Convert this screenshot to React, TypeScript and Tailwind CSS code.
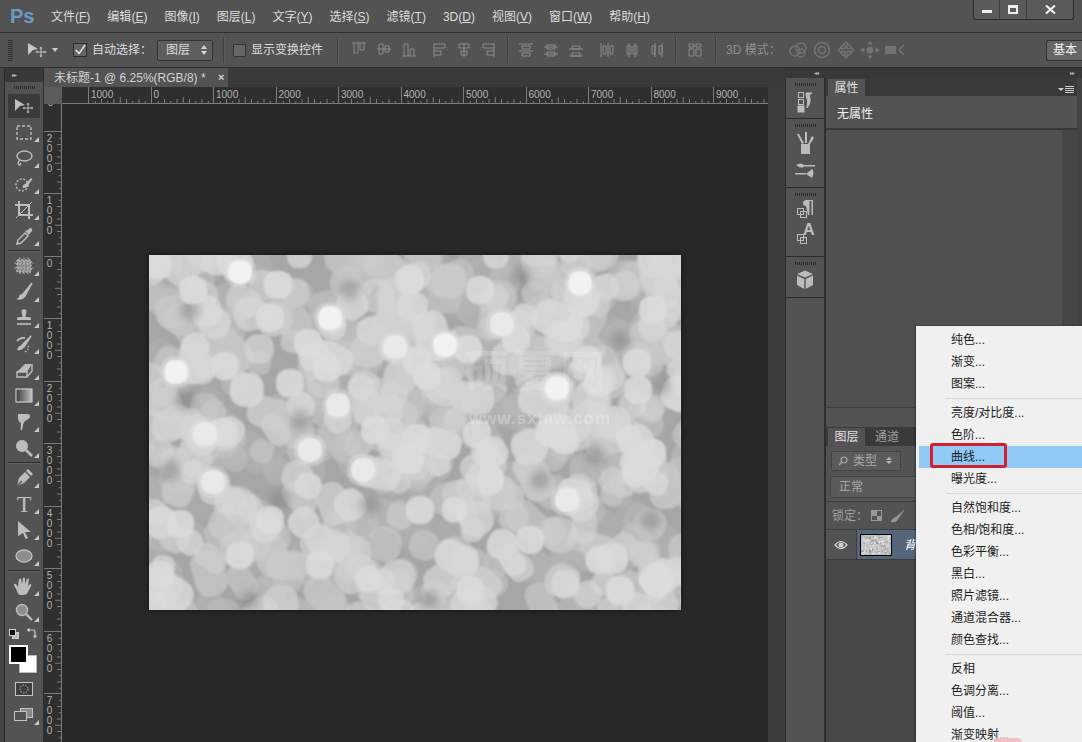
import type { ReactNode } from "react";

const menus = [
  ["文件", "F"],
  ["编辑", "E"],
  ["图像", "I"],
  ["图层", "L"],
  ["文字", "Y"],
  ["选择", "S"],
  ["滤镜", "T"],
  ["3D", "D"],
  ["视图", "V"],
  ["窗口", "W"],
  ["帮助", "H"],
];

// items of the adjustment layer menu, null is a separator
const adjustItems: (string | null)[] = [
  "纯色...",
  "渐变...",
  "图案...",
  null,
  "亮度/对比度...",
  "色阶...",
  "曲线...",
  "曝光度...",
  null,
  "自然饱和度...",
  "色相/饱和度...",
  "色彩平衡...",
  "黑白...",
  "照片滤镜...",
  "通道混合器...",
  "颜色查找...",
  null,
  "反相",
  "色调分离...",
  "阈值...",
  "渐变映射...",
];

function rng(seed: number) {
  return () => {
    seed |= 0;
    seed = (seed + 0x6d2b79f5) | 0;
    let t = Math.imul(seed ^ (seed >>> 15), 1 | seed);
    t = (t + Math.imul(t ^ (t >>> 7), 61 | t)) ^ t;
    return ((t ^ (t >>> 14)) >>> 0) / 4294967296;
  };
}

// page coordinates of the hottest highlights
const hotSpots = [
  [240, 272], [330, 318], [176, 372], [445, 345], [557, 388], [580, 283], [395, 347], [310, 450],
  [363, 470], [213, 482], [567, 500], [205, 434], [338, 405], [502, 324],
];

const softSpots = [
  [278, 285], [158, 265], [193, 290], [270, 318], [225, 366], [308, 343], [327, 368], [290, 383],
  [468, 349], [417, 361], [427, 376], [516, 339], [653, 310], [637, 363], [638, 390], [587, 360],
  [598, 383], [417, 438], [549, 432], [652, 453], [636, 473], [410, 460], [477, 434], [565, 440],
  [223, 432], [407, 458], [320, 565], [180, 524], [470, 590], [240, 555], [530, 540], [160, 575],
  [600, 560], [420, 510], [490, 480], [270, 520], [375, 430], [480, 290], [410, 280], [620, 590],
];

const darkSpots = [
  [185, 400], [370, 505], [595, 455], [660, 385], [280, 500], [480, 370], [190, 310], [620, 340],
  [250, 600], [430, 600], [540, 480], [300, 420], [650, 520], [350, 290], [170, 470], [520, 275],
];

function Bokeh() {
  const r = rng(23);
  const blobs = Array.from({ length: 680 }, () => {
    const s = 23 + r() * 13;
    const stretch = r() > 0.85 ? 1.45 : 1;
    const g = Math.round(172 + r() * 48);
    return {
      x: r() * 552 - 20,
      y: r() * 375 - 20,
      w: s * stretch,
      h: s,
      rot: r() * 90,
      g,
      o: 0.55 + r() * 0.35,
    };
  }).sort((a, b) => a.g - b.g);

  return (
    <svg width="532" height="355" viewBox="0 0 532 355" className="block">
      <defs>
        <filter id="bokehBlur" x="-5%" y="-5%" width="110%" height="110%">
          <feGaussianBlur stdDeviation="1.1" />
        </filter>
        <filter id="bokehDark" x="-5%" y="-5%" width="110%" height="110%">
          <feGaussianBlur stdDeviation="4" />
        </filter>
      </defs>
      <rect width="532" height="355" fill="#a6a6a6" />
      <g filter="url(#bokehBlur)">
        {blobs.map((b, i) => (
          <rect
            key={i}
            x={b.x}
            y={b.y}
            width={b.w}
            height={b.h}
            rx={b.h * 0.42}
            transform={`rotate(${b.rot} ${b.x + b.w / 2} ${b.y + b.h / 2})`}
            fill={`rgb(${b.g},${b.g},${b.g})`}
            opacity={b.o}
          />
        ))}
      </g>
      <g filter="url(#bokehDark)">
        {darkSpots.map(([x, y], i) => (
          <circle key={i} cx={x - 149} cy={y - 255} r="10" fill="#7f7f7f" opacity="0.5" />
        ))}
      </g>
      <g filter="url(#bokehBlur)">
        {softSpots.map(([x, y], i) => (
          <rect key={i} x={x - 163} y={y - 269} width="28" height="28" rx="12" fill="#dcdcdc" opacity="0.85" />
        ))}
        {hotSpots.map(([x, y], i) => (
          <g key={i}>
            <rect x={x - 165} y={y - 271} width="32" height="32" rx="14" fill="#dedede" opacity="0.5" />
            <rect x={x - 161} y={y - 267} width="24" height="24" rx="10" fill={i < 6 ? "#f2f2f2" : "#e9e9e9"} />
          </g>
        ))}
      </g>
    </svg>
  );
}

function Thumb() {
  const r = rng(5);
  return (
    <svg width="30" height="20" viewBox="0 0 30 20" className="block">
      <rect width="30" height="20" fill="#c4c4c4" />
      {Array.from({ length: 150 }, (_, i) => (
        <rect key={i} x={r() * 30} y={r() * 20} width="1.2" height="1.2" fill={r() > 0.5 ? "#eeeeee" : "#8f8f8f"} />
      ))}
    </svg>
  );
}

function MoveIcon() {
  return (
    <svg width="20" height="16" viewBox="0 0 20 16" fill="currentColor">
      <path d="M1 1 L11 7 L6 8 L1 13 Z" />
      <path d="M14 6 v8 M10 10 h8" stroke="currentColor" strokeWidth="1" />
      <path d="M14 4.5 l-1.6 2 h3.2 Z M14 15.5 l-1.6 -2 h3.2 Z M8.5 10 l2 -1.6 v3.2 Z M19.5 10 l-2 -1.6 v3.2 Z" />
    </svg>
  );
}

function Ic({ children, fill = "none" }: { children: ReactNode; fill?: string }) {
  return (
    <svg width="20" height="20" viewBox="0 0 20 20" fill={fill} stroke="currentColor" strokeWidth="1.4">
      {children}
    </svg>
  );
}

const toolGroups: ReactNode[][] = [
  [
    <MoveIcon />,
    <Ic><rect x="3" y="4" width="14" height="13" strokeDasharray="3 2" /></Ic>,
    <Ic><ellipse cx="10.5" cy="8" rx="7.5" ry="5" /><path d="M6 12 q-3 3 -1 5 q2 0 1.5 -2" /></Ic>,
    <Ic>
      <circle cx="8" cy="11" r="6" strokeDasharray="2 1.6" />
      <path d="M9 14 q-1 -3 2 -4 l6 -6 l1.5 1 l-5 7 q-1 2.5 -4.5 2 Z" fill="currentColor" stroke="none" />
    </Ic>,
    <Ic>
      <path d="M5 1 v14 h14 M1 5 h14 v14" strokeWidth="2" />
      <path d="M2 18 L18 2" strokeWidth="1" />
    </Ic>,
    <Ic>
      <path d="M3 18 l1 -4 l7 -7 l3 3 l-7 7 Z" fill="none" />
      <path d="M11 5 l4 4 l1 -2 l2 -2 q1 -3 -2 -3 l-2 2 Z" fill="currentColor" stroke="none" />
    </Ic>,
  ],
  [
    <Ic>
      <rect x="3" y="4" width="14" height="12" rx="1" fill="#8a8a8a" strokeDasharray="2 1.4" />
      <path d="M6 1.5 v17 M10 1.5 v17 M14 1.5 v17 M0.5 7 h19 M0.5 12 h19" strokeWidth="1" strokeDasharray="1.5 1.5" />
    </Ic>,
    <Ic>
      <path d="M18 1 L9 12 L11 14 Z" fill="currentColor" />
      <path d="M9 12 q-4 0 -4 3 q-1 2 -3 2 q5 2 8 -1 q2 -2 1 -2 Z" fill="currentColor" stroke="none" />
    </Ic>,
    <Ic fill="currentColor">
      <path d="M8 2 q2 -1.5 4 0 q1 2 0 4 l-0.5 3 h4 q1.5 0 1.5 3 h-14 q0 -3 1.5 -3 h4 l-0.5 -3 q-1 -2 0 -4 Z" stroke="none" />
      <path d="M3 16 h14" strokeWidth="1.6" />
    </Ic>,
    <Ic>
      <path d="M17 2 L8 11 L10 13 Z" fill="currentColor" />
      <path d="M8 11 q-4 1 -5 5 q5 1 7 -3 Z" fill="currentColor" stroke="none" />
      <path d="M3 7 q3 -4 8 -3" strokeWidth="1.8" />
      <path d="M14 12 q2 3 -3 6" strokeDasharray="1.5 1.5" />
    </Ic>,
    <Ic>
      <path d="M3 12 L11 4 h7 L13 12 Z" fill="currentColor" stroke="none" />
      <path d="M3 12 h10 v5 h-10 Z M13 17 L18 11 V4" />
    </Ic>,
    <svg width="20" height="18" viewBox="0 0 20 18">
      <defs>
        <linearGradient id="toolGrad" x1="0" x2="1" y1="0" y2="0">
          <stop offset="0" stopColor="#3a3a3a" />
          <stop offset="1" stopColor="#c0c0c0" />
        </linearGradient>
      </defs>
      <rect x="2" y="2" width="16" height="13" fill="url(#toolGrad)" stroke="#c8c8c8" strokeWidth="1.2" />
    </svg>,
    <Ic fill="currentColor">
      <path d="M4 2 h9 q3 0 3 2 q0 3 -4 4 q-1 2 -2 2 l-1 3 q0 1 -1 5 q-1 1 -1.5 -1 l0.5 -6 q-3 -1 -3 -6 Z" stroke="none" />
    </Ic>,
    <Ic>
      <circle cx="8" cy="8" r="6" fill="currentColor" stroke="none" />
      <path d="M12 12 L18 18" strokeWidth="2.6" />
    </Ic>,
  ],
  [
    <Ic>
      <path d="M3 18 l2 -8 l6 -6 l5 5 l-6 6 Z" fill="currentColor" stroke="none" />
      <path d="M12 3 l2 -2 l5 5 l-2 2 Z" fill="currentColor" stroke="none" />
      <path d="M3 18 l5 -5" stroke="#535353" />
    </Ic>,
    <span className="font-['Liberation_Serif',serif] text-[24px] leading-none">T</span>,
    <svg width="16" height="20" viewBox="0 0 16 20" fill="currentColor">
      <path d="M2 1 L15 12 L9 12 L12 18 L9.5 19 L7 13 L2 16 Z" />
    </svg>,
    <Ic><ellipse cx="10" cy="10" rx="8" ry="6" fill="#8d8d8d" /></Ic>,
  ],
  [
    <Ic fill="currentColor">
      <path d="M5 3 q1 -1 2 0 l1 5 l1 -6 q1 -1 2 0 v6 l2 -5 q1 -1 2 0 l-1 7 l2 -2 q2 0 1 2 l-3 6 q-1 3 -5 3 h-2 q-3 0 -4 -4 l-3 -6 q0 -2 2 -1 l2 3 Z" stroke="none" />
    </Ic>,
    <Ic>
      <circle cx="8" cy="8" r="5.5" fill="#8d8d8d" />
      <path d="M12 12 L18 18" strokeWidth="2.4" />
    </Ic>,
  ],
];

const alignIcons = [
  "M1 1 h14 M3 1 v10 h4 v-10 M9 1 v7 h4 v-7",
  "M1 7 h14 M3 2 v10 h4 v-10 h-4 M9 4 v6 h4 v-6 h-4",
  "M1 14 h14 M3 14 v-12 h4 v12 M9 14 v-7 h4 v7",
  "M2 1 v14 M2 2 h11 v4 h-11 M2 9 h7 v4 h-7",
  "M8 1 v14 M3 2 h10 v4 h-10 v-4 M5 9 h6 v4 h-6 v-4",
  "M14 1 v14 M14 2 h-11 v4 h11 M14 9 h-7 v4 h7",
];

const distributeIcons = [
  "M1 2 h14 M1 9 h14 M4 4 h8 v3 h-8 Z M4 11 h8 v3 h-8 Z",
  "M1 5 h14 M1 12 h14 M4 3 h8 v4 h-8 Z M4 10 h8 v4 h-8 Z",
  "M1 7 h14 M1 14 h14 M4 4 h8 v3 h-8 Z M4 11 h8 v3 h-8 Z",
  "M2 1 v14 M9 1 v14 M4 4 h3 v8 h-3 Z M11 4 h3 v8 h-3 Z",
  "M5 1 v14 M11 1 v14 M3 4 h4 v8 h-4 Z M9 4 h4 v8 h-4 Z",
  "M7 1 v14 M14 1 v14 M4 4 h3 v8 h-3 Z M11 4 h3 v8 h-3 Z",
];

function BarIcon({ d }: { d: string }) {
  return (
    <svg width="16" height="16" viewBox="0 0 16 16" fill="none" stroke="currentColor" strokeWidth="1" className="shrink-0">
      <path d={d} />
    </svg>
  );
}

function VLine() {
  return <div className="h-[26px] w-px shrink-0 bg-[#3f3f3f] shadow-[1px_0_0_#5f5f5f]" />;
}

function Grip() {
  return <div className="mx-auto h-[3px] w-[21px] bg-[repeating-linear-gradient(90deg,#2b2b2b_0,#2b2b2b_1px,transparent_1px,transparent_2px)]" />;
}

function MenuBar() {
  return (
    <div className="flex h-[33px] shrink-0 items-start border-b border-[#2e2e2e] bg-[#535353]">
      <span className="ml-[10px] mt-[3px] w-[41px] text-[20px] font-bold leading-[26px] text-[#6c9cc6]">Ps</span>
      <div className="flex gap-[17px] pt-[8px] leading-[18px] text-[#dcdcdc]">
        {menus.map(([name, key]) => (
          <span key={key} className="whitespace-nowrap">
            {name}(<span className="underline">{key}</span>)
          </span>
        ))}
      </div>
      <div className="ml-auto mr-[8px] flex h-[20px] rounded-b-[3px] border border-t-0 border-[#2c2c2c] bg-[#5a5a5a] text-[#eeeeee]">
        <div className="flex w-[26px] items-center justify-center border-r border-[#3d3d3d]">
          <div className="mt-[4px] h-[3px] w-[10px] bg-[#eeeeee]" />
        </div>
        <div className="flex w-[27px] items-center justify-center border-r border-[#3d3d3d]">
          <div className="h-[9px] w-[10px] border-2 border-t-[3px] border-[#eeeeee]" />
        </div>
        <div className="flex w-[46px] items-center justify-center">
          <svg width="11" height="9" viewBox="0 0 11 9" stroke="currentColor" strokeWidth="2.2">
            <path d="M1 0.5 L10 8.5 M10 0.5 L1 8.5" />
          </svg>
        </div>
      </div>
    </div>
  );
}

function OptionsBar() {
  return (
    <div className="flex h-[35px] shrink-0 items-center overflow-hidden border-b border-[#2e2e2e] bg-[#535353] text-[#dcdcdc]">
      <div className="ml-[8px] h-[22px] w-[5px] bg-[repeating-linear-gradient(0deg,#333333_0,#333333_1px,transparent_1px,transparent_2px)]" />
      <div className="ml-[14px] w-[22px] text-[#c8c8c8]">
        <MoveIcon />
      </div>
      <div className="ml-[3px] h-0 w-0 border-x-[3px] border-t-[4px] border-x-transparent border-t-[#d0d0d0]" />
      <div className="ml-[15px] flex h-[14px] w-[14px] items-center justify-center border border-[#2e2e2e] bg-[#666666]">
        <svg width="14" height="14" viewBox="0 0 14 14" fill="none" stroke="#e8e8e8" strokeWidth="1.8">
          <path d="M2 7 L6 11 L13 1" />
        </svg>
      </div>
      <span className="ml-[5px] w-[58px] whitespace-nowrap">自动选择：</span>
      <div className="ml-[7px] flex h-[21px] w-[56px] items-center justify-between rounded-[2px] border border-[#333333] bg-[#5e5e5e] pl-[8px] pr-[5px]">
        图层
        <span className="flex flex-col gap-[2px]">
          <span className="h-0 w-0 border-x-[3px] border-b-[4px] border-x-transparent border-b-[#d8d8d8]" />
          <span className="h-0 w-0 border-x-[3px] border-t-[4px] border-x-transparent border-t-[#d8d8d8]" />
        </span>
      </div>
      <div className="ml-[10px]"><VLine /></div>
      <div className="ml-[9px] h-[13px] w-[13px] rounded-[1px] border border-[#333333] bg-[#666666]" />
      <span className="ml-[5px] whitespace-nowrap">显示变换控件</span>
      <div className="ml-[14px]"><VLine /></div>
      <div className="ml-[13px] flex w-[66px] justify-between text-[#8b8b8b]">
        {alignIcons.slice(0, 3).map((d) => <BarIcon key={d} d={d} />)}
      </div>
      <div className="ml-[15px] flex w-[64px] justify-between text-[#8b8b8b]">
        {alignIcons.slice(3).map((d) => <BarIcon key={d} d={d} />)}
      </div>
      <div className="ml-[11px]"><VLine /></div>
      <div className="ml-[10px] flex w-[66px] justify-between text-[#8b8b8b]">
        {distributeIcons.slice(0, 3).map((d) => <BarIcon key={d} d={d} />)}
      </div>
      <div className="ml-[15px] flex w-[65px] justify-between text-[#8b8b8b]">
        {distributeIcons.slice(3).map((d) => <BarIcon key={d} d={d} />)}
      </div>
      <div className="ml-[11px]"><VLine /></div>
      <div className="ml-[11px] text-[#8b8b8b]">
        <BarIcon d="M2 2 h5 v3 h-5 Z M9 2 h5 v3 h-5 Z M2 7 h5 v7 h-5 Z M9 7 h5 v7 h-5 Z" />
      </div>
      <div className="ml-[12px]"><VLine /></div>
      <span className="ml-[10px] w-[62px] whitespace-nowrap text-[#8f8f8f]">3D 模式：</span>
      <div className="flex w-[117px] items-center justify-between text-[#737373]">
        <svg width="20" height="18" viewBox="0 0 20 18" fill="none" stroke="currentColor" strokeWidth="1.4">
          <circle cx="7" cy="10" r="5" /><circle cx="13" cy="7" r="5" /><circle cx="13" cy="12" r="4" />
        </svg>
        <svg width="18" height="18" viewBox="0 0 18 18" fill="none" stroke="currentColor" strokeWidth="1.6">
          <circle cx="9" cy="9" r="7.5" /><circle cx="9" cy="9" r="3.5" />
        </svg>
        <svg width="18" height="18" viewBox="0 0 18 18" fill="none" stroke="currentColor" strokeWidth="1.4">
          <path d="M9 1 l3 3 h-2 v3.5 h3.5 v-2 l3 3.5 l-3 3.5 v-2 h-3.5 v3.5 h2 l-3 3 l-3 -3 h2 v-3.5 h-3.5 v2 l-3 -3.5 l3 -3.5 v2 h3.5 v-3.5 h-2 Z" />
        </svg>
        <svg width="20" height="18" viewBox="0 0 20 18" fill="currentColor">
          <circle cx="10" cy="9" r="3.5" />
          <path d="M10 0 l3 3.5 h-6 Z M10 18 l3 -3.5 h-6 Z M0 9 l4.5 -3 v6 Z M20 9 l-4.5 -3 v6 Z" />
        </svg>
        <svg width="20" height="14" viewBox="0 0 20 14" fill="currentColor">
          <rect x="0" y="3" width="11" height="8" />
          <path d="M14 7 l5 -5 M14 7 l5 5" stroke="currentColor" fill="none" strokeWidth="1.2" />
        </svg>
      </div>
      <div className="ml-auto flex h-[21px] w-[36px] shrink-0 items-center rounded-l-[3px] border border-r-0 border-[#333333] bg-[#666666] pl-[6px] text-[#f0f0f0]">
        基本
      </div>
    </div>
  );
}

function ToolPanel() {
  return (
    <div className="flex w-[44px] shrink-0 border-r border-[#2e2e2e] bg-[#444444]">
      <div className="ml-[4px] flex flex-1 flex-col border-l border-[#2a2a2a] bg-[#535353]">
        <div className="flex h-[14px] items-center bg-[#383838] pl-[7px] text-[6px] tracking-[-1px] text-[#b0b0b0]">▸▸</div>
        <div className="flex h-[11px] items-center"><Grip /></div>
        {toolGroups.map((group, gi) => (
          <div key={gi}>
            {group.map((icon, i) => (
              <div key={i} className="relative flex h-[26px] items-center justify-center">
                {gi === 0 && i === 0 && <div className="absolute inset-x-[3px] inset-y-px rounded-[1px] bg-[#3a3a3a]" />}
                <div className="relative flex items-center justify-center text-[#bdbdbd]">{icon}</div>
                {!(gi === 0 && i === 0) && (
                  <div className="absolute bottom-[3px] right-[4px] h-0 w-0 border-b-[5px] border-l-[5px] border-b-[#c8c8c8] border-l-transparent" />
                )}
              </div>
            ))}
            {gi < 3 && <div className="mx-[3px] mb-[2px] mt-px h-px bg-[#2e2e2e] shadow-[0_1px_0_#606060]" />}
          </div>
        ))}
        <div className="flex h-[17px] items-center justify-between px-[4px]">
          <div className="relative h-[10px] w-[11px]">
            <div className="absolute left-[3px] top-[3px] h-[7px] w-[7px] border border-[#cccccc] bg-[#bbbbbb]" />
            <div className="absolute left-0 top-0 h-[7px] w-[7px] border border-[#cccccc] bg-[#111111]" />
          </div>
          <svg width="11" height="11" viewBox="0 0 11 11" fill="none" stroke="#cccccc" strokeWidth="1.2" className="mr-[2px]">
            <path d="M2 2 h5 q2 0 2 2 v5 M3.5 0.5 L1.5 2 L3.5 3.5 M7.5 7.5 L9 9.5 L10.5 7.5" />
          </svg>
        </div>
        <div className="relative mt-[3px] h-[31px]">
          <div className="absolute left-[14px] top-[10px] h-[18px] w-[18px] border border-[#bbbbbb] bg-white" />
          <div className="absolute left-[4px] top-0 h-[19px] w-[19px] border-2 border-white bg-black" />
        </div>
        <div className="flex h-[26px] items-center justify-center">
          <svg width="18" height="14" viewBox="0 0 18 14" fill="none" stroke="#c4c4c4" strokeWidth="1">
            <rect x="0.5" y="0.5" width="17" height="13" fill="#3e3e3e" />
            <circle cx="9" cy="7" r="4" strokeDasharray="1.4 1.4" />
          </svg>
        </div>
        <div className="relative flex h-[26px] items-center justify-center">
          <svg width="20" height="14" viewBox="0 0 20 14" fill="none" stroke="#c4c4c4" strokeWidth="1">
            <rect x="6.5" y="0.5" width="12" height="9" fill="#888888" />
            <rect x="0.5" y="3.5" width="12" height="9" fill="#535353" />
          </svg>
          <div className="absolute bottom-[3px] right-[4px] h-0 w-0 border-b-[5px] border-l-[5px] border-b-[#c8c8c8] border-l-transparent" />
        </div>
      </div>
    </div>
  );
}

function Ticks({ vertical }: { vertical?: boolean }) {
  const marks = Array.from({ length: 9 }, (_, i) => (i + 1) * 6.25);
  if (vertical) {
    return (
      <svg width="6" height="62.5" className="absolute right-0 top-0" stroke="#7c7c7c">
        {marks.map((m, i) => (
          <line key={m} x1={i === 4 ? 0 : i % 2 ? 2 : 4} x2="6" y1={m} y2={m} />
        ))}
      </svg>
    );
  }
  return (
    <svg width="62.5" height="6" className="absolute bottom-0 left-0" stroke="#7c7c7c">
      {marks.map((m, i) => (
        <line key={m} y1={i === 4 ? 0 : i % 2 ? 2 : 4} y2="6" x1={m} x2={m} />
      ))}
    </svg>
  );
}

function TopRuler() {
  const labels = ["1000", "0", "1000", "2000", "3000", "4000", "5000", "6000", "7000", "8000", "9000"];
  return (
    <div className="flex h-[17px] shrink-0 overflow-hidden bg-[#2f2f2f] text-[10px] leading-[13px] text-[#b4b4b4]">
      <div className="h-full w-[18px] shrink-0 bg-[#5c5c5c]" />
      <div className="h-full w-[26px] shrink-0 border-b border-[#7c7c7c]" />
      {labels.map((label, i) => (
        <div key={i} className="relative h-full w-[62.5px] shrink-0 border-b border-l border-[#7c7c7c] pl-[2px] pt-px">
          {label}
          <Ticks />
        </div>
      ))}
    </div>
  );
}

function SideRuler() {
  const labels = ["2000", "1000", "0", "1000", "2000", "3000", "4000", "5000", "6000", "7000"];
  return (
    <div className="w-[18px] shrink-0 overflow-hidden border-r border-[#7c7c7c] bg-[#2f2f2f] text-center text-[10px] leading-[10px] text-[#b4b4b4]">
      <div className="h-[26.5px] overflow-hidden pr-[4px]">
        <div className="-mt-[6px]">0</div>
      </div>
      {labels.map((label, i) => (
        <div key={i} className="relative h-[62.5px] border-t border-[#7c7c7c] pr-[6px] pt-[2px]">
          {label.split("").map((digit, d) => (
            <div key={d}>{digit}</div>
          ))}
          <Ticks vertical />
        </div>
      ))}
    </div>
  );
}

function Document() {
  return (
    <div className="flex min-w-0 flex-1 flex-col">
      <div className="flex h-[19px] shrink-0 bg-[#3a3a3a]">
        <div className="flex w-[184px] items-center bg-[#535353] pl-[10px] text-[#d4d4d4]">
          <span className="w-[164px] whitespace-nowrap">未标题-1 @ 6.25%(RGB/8) *</span>
          <span className="text-[11px] font-bold leading-none">×</span>
        </div>
      </div>
      <div className="flex min-h-0 flex-1">
        <div className="flex min-w-0 flex-1 flex-col">
          <TopRuler />
          <div className="flex min-h-0 flex-1">
            <SideRuler />
            <div className="relative min-w-0 flex-1 overflow-hidden bg-[#282828]">
              <div className="relative mx-auto mt-[151px] h-[355px] w-[532px] shadow-[0_0_6px_rgba(0,0,0,0.5)]">
                <Bokeh />
                <div className="absolute left-[315px] top-[88px] whitespace-nowrap text-[46px] font-bold leading-[58px] tracking-[2px] text-white/15">
                  硕夏网
                </div>
                <div className="absolute left-[320px] top-[152px] whitespace-nowrap text-[17px] font-bold leading-[24px] tracking-[1px] text-white/25">
                  www.sxiaw.com
                </div>
              </div>
            </div>
          </div>
        </div>
        <div className="w-[17px] shrink-0 bg-[#3c3c3c]" />
      </div>
    </div>
  );
}

function DockGroup({ children, className }: { children?: ReactNode; className: string }) {
  return (
    <div className={`shrink-0 border-b border-[#2a2a2a] ${className}`}>
      <div className="flex h-[9px] items-center pt-[3px]"><Grip /></div>
      <div className="flex flex-col items-center text-[#bcbcbc]">{children}</div>
    </div>
  );
}

function Dock() {
  return (
    <div className="flex w-[41px] shrink-0 flex-col border-l border-r-2 border-[#2f2f2f] bg-[#535353]">
      <DockGroup className="h-[41px]">
        <svg width="18" height="24" viewBox="0 0 18 24" fill="none" stroke="currentColor" className="mt-[2px]">
          <rect x="2.5" y="3.5" width="5" height="5" />
          <rect x="2.5" y="10.5" width="5" height="5" />
          <rect x="2" y="17" width="6" height="6" fill="currentColor" />
          <path d="M10 4 h6 l-3 2 q3 7 -2 13 q2 -7 -1 -13 Z" fill="currentColor" />
        </svg>
      </DockGroup>
      <DockGroup className="h-[69px]">
        <svg width="20" height="24" viewBox="0 0 20 24" fill="currentColor" className="mt-[3px]">
          <rect x="6" y="13" width="9" height="10" />
          <path d="M7 13 L2 3 L4 3 L9 12 Z M10 12 L10 1 L12 1 L12 12 Z M13 13 L17 5 L19 7 L15 13 Z" />
        </svg>
        <svg width="20" height="18" viewBox="0 0 20 18" fill="currentColor" className="mt-[6px]">
          <path d="M1 4 q5 -3 8 0 h11 v1.4 h-11 q-3 3 -8 -1.4 Z M0 12 h11 v1.4 h-11 Z M11 13 l6 -5 q3 3 0 9 Z" />
        </svg>
      </DockGroup>
      <DockGroup className="h-[69px]">
        <svg width="18" height="22" viewBox="0 0 18 22" fill="none" stroke="currentColor" className="mt-[1px]">
          <rect x="1.5" y="10.5" width="6" height="6" />
          <rect x="4.5" y="13.5" width="6" height="6" />
          <path d="M10 8 q-3 0 -3 -3 q0 -3 4 -3 h6 v15 h-1.5 v-14 h-2 v14 h-1.5 Z" fill="currentColor" stroke="none" />
        </svg>
        <div className="relative mt-[4px] h-[22px] w-[18px]">
          <svg width="18" height="22" viewBox="0 0 18 22" fill="none" stroke="currentColor" className="absolute inset-0">
            <rect x="1.5" y="10.5" width="6" height="6" />
            <rect x="4.5" y="13.5" width="6" height="6" />
          </svg>
          <span className="absolute left-[7px] top-[-3px] text-[16px] font-bold leading-[18px]">A</span>
        </div>
      </DockGroup>
      <DockGroup className="h-[41px]">
        <svg width="18" height="20" viewBox="0 0 18 20" fill="currentColor" className="mt-[4px]">
          <path d="M9 0.5 L17 4 L9 7.5 L1 4 Z" />
          <path d="M1 5.5 L8.3 9 V19 L1 15 Z M17 5.5 L9.7 9 V19 L17 15 Z" />
        </svg>
      </DockGroup>
    </div>
  );
}

function PanelTabs({ children }: { children: ReactNode }) {
  return <div className="flex h-[19px] shrink-0 items-end bg-[#3a3a3a] pl-[2px] text-[#9f9f9f]">{children}</div>;
}

function Panels() {
  return (
    <div className="flex min-w-0 flex-1 flex-col border-r-[5px] border-[#424242] text-[#dcdcdc]">
      <div className="flex h-[18px] shrink-0 items-end bg-[#3a3a3a] pl-[2px]">
        <div className="flex h-[17px] w-[37px] items-center justify-center bg-[#535353] text-[#e0e0e0]">属性</div>
        <div className="mb-[3px] ml-auto mr-[3px] flex items-center gap-px">
          <span className="h-0 w-0 border-x-[3px] border-t-[3px] border-x-transparent border-t-[#cccccc]" />
          <span className="flex w-[9px] flex-col gap-px">
            <span className="h-px bg-[#cccccc]" />
            <span className="h-px bg-[#cccccc]" />
            <span className="h-px bg-[#cccccc]" />
            <span className="h-px bg-[#cccccc]" />
          </span>
        </div>
      </div>
      <div className="flex h-[34px] shrink-0 items-center border-b-2 border-[#383838] bg-[#535353] pl-[11px] pt-[4px] text-[#f0f0f0]">无属性</div>
      <div className="flex h-[277px] shrink-0 justify-end bg-[#505050]">
        <div className="w-[15px] bg-[#464646]" />
      </div>
      <div className="h-[20px] shrink-0 border-t border-[#3c3c3c] bg-[#535353]" />
      <PanelTabs>
        <div className="flex h-[18px] w-[37px] items-center justify-center bg-[#535353] text-[#e0e0e0]">图层</div>
        <div className="ml-[3px] flex h-[18px] w-[38px] items-center justify-center text-[#9f9f9f]">通道</div>
      </PanelTabs>
      <div className="flex min-h-0 flex-1 flex-col bg-[#535353]">
        <div className="flex h-[29px] shrink-0 items-center pl-[5px]">
          <div className="flex h-[20px] w-[70px] items-center rounded-[2px] border border-[#444444] bg-[#5b5b5b] pl-[6px] text-[#a8a8a8]">
            <svg width="10" height="10" viewBox="0 0 10 10" fill="none" stroke="currentColor" strokeWidth="1.2">
              <circle cx="6" cy="4" r="3" />
              <path d="M4 6 L1 9" />
            </svg>
            <span className="ml-[5px]">类型</span>
            <span className="ml-[9px] flex flex-col gap-px">
              <span className="h-0 w-0 border-x-[3px] border-b-[3px] border-x-transparent border-b-[#b8b8b8]" />
              <span className="h-0 w-0 border-x-[3px] border-t-[3px] border-x-transparent border-t-[#b8b8b8]" />
            </span>
          </div>
        </div>
        <div className="flex h-[24px] shrink-0 items-center pl-[4px]">
          <div className="flex h-[22px] w-[130px] items-center rounded-[2px] border border-[#444444] bg-[#5b5b5b] pl-[8px] text-[#a8a8a8]">正常</div>
        </div>
        <div className="mt-[2px] flex h-[29px] shrink-0 items-center border-y border-[#3e3e3e] pl-[6px] text-[#a0a0a0]">
          <span className="w-[37px] whitespace-nowrap">锁定：</span>
          <div className="ml-[2px] grid h-[11px] w-[11px] grid-cols-2 grid-rows-2 border border-[#999999]">
            <span className="bg-[#999999]" />
            <span />
            <span />
            <span className="bg-[#999999]" />
          </div>
          <svg width="16" height="14" viewBox="0 0 16 14" fill="#999999" className="ml-[8px]">
            <path d="M15 0 L6 8 L8 10 Z M6 8 q-4 1 -5 5 q5 1 7 -3 Z" />
          </svg>
        </div>
        <div className="flex h-[30px] shrink-0 border-b border-[#3a3a3a]">
          <div className="flex w-[31px] items-center justify-center border-r border-[#3e3e3e]">
            <svg width="14" height="10" viewBox="0 0 14 10" fill="none" stroke="#d0d0d0" strokeWidth="1.2">
              <path d="M1 5 q6 -7 12 0 q-6 7 -12 0 Z" />
              <circle cx="7" cy="5" r="2" fill="#d0d0d0" />
            </svg>
          </div>
          <div className="flex flex-1 items-center bg-[#55667a] pl-[3px]">
            <div className="border border-black">
              <Thumb />
            </div>
            <span className="ml-[12px] italic text-white">背景</span>
          </div>
        </div>
        <div className="flex-1 bg-[#474747]" />
      </div>
    </div>
  );
}

function AdjustMenu() {
  return (
    <div className="absolute bottom-0 left-[916px] right-0 top-[326px] overflow-hidden bg-[#f0f0f0] pt-[3px] text-[#1c1c1c] shadow-[-1px_0_2px_rgba(0,0,0,0.35)]">
      {adjustItems.map((item, i) =>
        item === null ? (
          <div key={i} className="flex h-[7px] items-center pl-[30px]">
            <div className="h-px w-full bg-[#d7d7d7]" />
          </div>
        ) : (
          <div key={i} className={`relative ml-[3px] flex h-[22px] items-center pl-[32px] ${item === "曲线..." ? "bg-[#91c9f7]" : ""}`}>
            {item}
            {item === "曲线..." && (
              <div className="absolute left-[11px] top-[-3px] h-[25px] w-[77px] rounded-[3px] border-[3px] border-[#d2202e]" />
            )}
          </div>
        ),
      )}
      <div className="absolute bottom-[-5px] left-[78px] h-[9px] w-[28px] rounded-full bg-[#f0c0c4]" />
    </div>
  );
}

export default function App() {
  return (
    <div className="relative flex h-[742px] w-[1082px] flex-col overflow-hidden bg-[#535353] font-['Liberation_Sans','Noto_Sans_CJK_SC',sans-serif] text-[12px]">
      <MenuBar />
      <OptionsBar />
      <div className="flex min-h-0 flex-1">
        <ToolPanel />
        <Document />
        <div className="flex w-[297px] shrink-0 flex-col">
          <div className="flex h-[10px] shrink-0 items-center justify-between bg-[#383838] pl-[29px] pr-[8px] text-[6px] tracking-[-1px] text-[#b0b0b0]">
            <span>◂◂</span>
            <span>▸▸</span>
          </div>
          <div className="flex min-h-0 flex-1">
            <Dock />
            <Panels />
          </div>
        </div>
      </div>
      <AdjustMenu />
    </div>
  );
}
